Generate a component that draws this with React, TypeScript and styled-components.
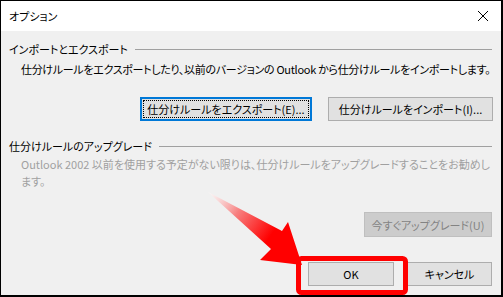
import React from 'react';
import styled, { createGlobalStyle } from 'styled-components';

const GlobalStyle = createGlobalStyle`
  html, body {
    margin: 0;
    padding: 0;
    background: #ffffff;
  }
  body {
    font-family: "Noto Sans CJK JP", "Noto Sans", sans-serif;
    font-feature-settings: "palt";
  }
`;

const Window = styled.div`
  position: relative;
  box-sizing: border-box;
  width: 503px;
  height: 297px;
  border: 1px solid #000;
  border-right-width: 2px;
  border-bottom-width: 2px;
  background: #f0f0f0;
  display: flex;
  flex-direction: column;
  overflow: hidden;
`;

const TitleBar = styled.div`
  height: 30px;
  flex: none;
  background: #ffffff;
  display: flex;
  align-items: center;
  justify-content: space-between;
  padding: 0 8px 0 8px;
  font-size: 11px;
  color: #000;
`;

const CloseButton = styled.div`
  width: 16px;
  height: 16px;
  display: flex;
  align-items: center;
  justify-content: center;
  margin-right: 2px;
`;

const Body = styled.div`
  flex: 1;
  padding: 10px 9px 0 8px;
  display: flex;
  flex-direction: column;
  font-size: 11px;
  color: #000;
`;

const GroupHeader = styled.div<{ $top?: number }>`
  display: flex;
  align-items: center;
  height: 16px;
  line-height: 16px;
  white-space: nowrap;
  margin-top: ${(p) => p.$top || 0}px;
  &::after {
    content: '';
    flex: 1;
    height: 1px;
    background: #a0a0a0;
    margin-left: 7px;
  }
`;

const Text = styled.div<{ $muted?: boolean; $top?: number; $tight?: boolean }>`
  padding-left: 12px;
  line-height: 17px;
  white-space: nowrap;
  margin-top: ${(p) => p.$top || 0}px;
  letter-spacing: ${(p) => (p.$tight ? '-0.3px' : '0')};
  color: ${(p) => (p.$muted ? '#a0a0a0' : '#000')};
`;

const ButtonRow = styled.div<{ $top: number; $gap: number; $right?: number }>`
  display: flex;
  justify-content: flex-end;
  gap: ${(p) => p.$gap}px;
  margin-top: ${(p) => p.$top}px;
  margin-right: ${(p) => p.$right || 0}px;
`;

const Button = styled.div<{ $w: number; $focused?: boolean; $disabled?: boolean; $h?: number }>`
  box-sizing: border-box;
  width: ${(p) => p.$w}px;
  height: ${(p) => p.$h || 24}px;
  display: flex;
  align-items: center;
  justify-content: center;
  font-size: 11px;
  white-space: nowrap;
  background: ${(p) => (p.$disabled ? '#cccccc' : '#e1e1e1')};
  border: ${(p) =>
    p.$focused ? '2px solid #0078d7' : p.$disabled ? '1px solid #bfbfbf' : '1px solid #adadad'};
  color: ${(p) => (p.$disabled ? '#838383' : '#000')};
  position: relative;
  ${(p) =>
    p.$focused &&
    `
    &::before {
      content: '';
      position: absolute;
      inset: 1px;
      border: 1px dotted #000;
    }
  `}
`;

const Overlay = styled.svg`
  position: absolute;
  left: 0;
  top: 0;
  pointer-events: none;
`;

export default function App() {
  return (
    <>
      <GlobalStyle />
      <Window>
        <TitleBar>
          <span>オプション</span>
          <CloseButton>
            <svg width="12" height="12" viewBox="0 0 12 12">
              <path d="M1 1 L11 11 M11 1 L1 11" stroke="#000" strokeWidth="1" />
            </svg>
          </CloseButton>
        </TitleBar>
        <Body>
          <GroupHeader>インポートとエクスポート</GroupHeader>
          <Text $top={4} $tight>
            仕分けルールをエクスポートしたり、以前のバージョンの Outlook から仕分けルールをインポートします。
          </Text>
          <ButtonRow $top={19} $gap={16} $right={-1}>
            <Button $w={172} $focused>
              仕分けルールをエクスポート(E)...
            </Button>
            <Button $w={165}>仕分けルールをインポート(I)...</Button>
          </ButtonRow>
          <GroupHeader $top={17}>仕分けルールのアップグレード</GroupHeader>
          <Text $muted $top={2}>
            Outlook 2002 以前を使用する予定がない限りは、仕分けルールをアップグレードすることをお勧めし
            <br />
            ます。
          </Text>
          <ButtonRow $top={22} $gap={0}>
            <Button $w={128} $h={25} $disabled>
              今すぐアップグレード(U)
            </Button>
          </ButtonRow>
          <ButtonRow $top={25} $gap={13}>
            <Button $w={86}>OK</Button>
            <Button $w={85}>キャンセル</Button>
          </ButtonRow>
        </Body>
        <Overlay width="503" height="297" viewBox="0 0 503 297">
          <defs>
            <linearGradient id="arrowFill" x1="207" y1="191" x2="290" y2="250" gradientUnits="userSpaceOnUse">
              <stop offset="0" stopColor="#ffffff" stopOpacity="0.6" />
              <stop offset="0.35" stopColor="#f78080" />
              <stop offset="0.75" stopColor="#ff0000" />
              <stop offset="1" stopColor="#ff0000" />
            </linearGradient>
          </defs>
          <polygon
            points="207,191 281,230 287,221 301,264 259,259 270,248"
            fill="url(#arrowFill)"
          />
          <rect x="297.5" y="257.5" width="107" height="34" rx="3" fill="none" stroke="#ff0000" strokeWidth="5" />
        </Overlay>
      </Window>
    </>
  );
}
